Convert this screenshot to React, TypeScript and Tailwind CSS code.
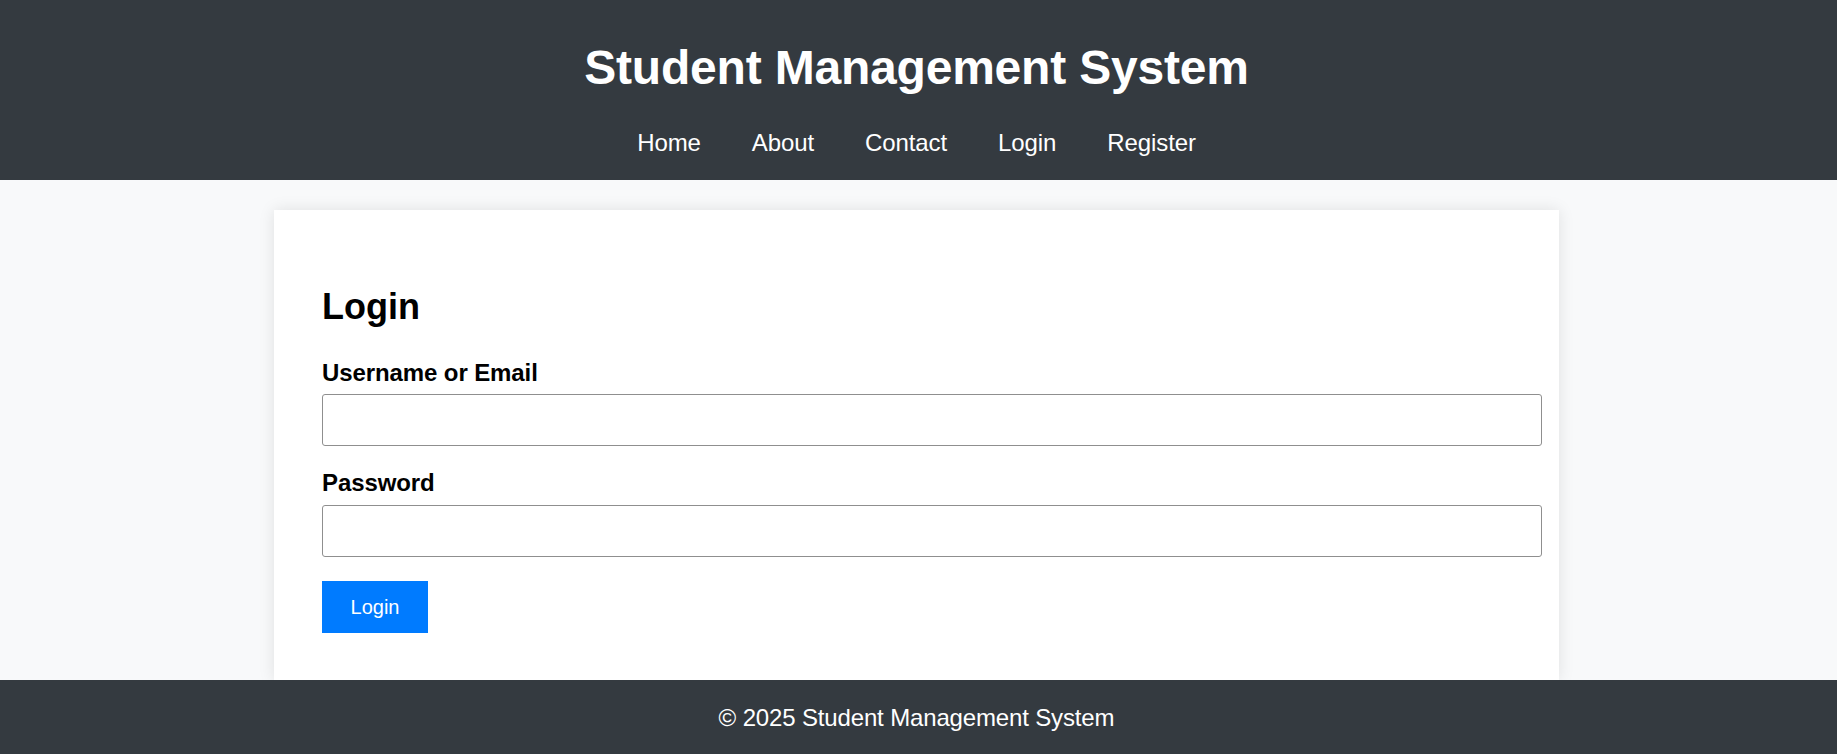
const navLinks = ["Home", "About", "Contact", "Login", "Register"];

const App: React.FC = () => {
    return (
        <div className="h-screen flex flex-col bg-[#f8f9fa] font-['Liberation_Sans',Arial,sans-serif] overflow-hidden">
            <header className="h-[180px] shrink-0 bg-[#343a40] text-white flex flex-col items-center pt-[40px] pr-[4px]">
                <h1 className="text-[48px] leading-[56px] font-bold tracking-[-0.2px]">Student Management System</h1>
                <nav className="mt-[33px] flex gap-[51px] text-[24px] leading-[28px] tracking-[-0.1px]">
                    {navLinks.map((link) => (
                        <a key={link} href="#" className="text-white">
                            {link}
                        </a>
                    ))}
                </nav>
            </header>

            <main className="flex-1 min-h-0">
                <div className="ml-[274px] mt-[30px] w-[1285px] h-[470px] bg-white shadow-[0_0_15px_rgba(0,0,0,0.1)] px-[48px] pt-[48px]">
                    <h2 className="mt-[28px] text-[36px] leading-[42px] font-bold text-black">Login</h2>
                    <form onSubmit={(e) => e.preventDefault()}>
                        <label htmlFor="username" className="block mt-[31px] text-[24px] leading-[28px] font-bold text-black tracking-[-0.1px]">
                            Username or Email
                        </label>
                        <input
                            id="username"
                            type="text"
                            className="block mt-[7px] w-[calc(100%+31px)] h-[52px] px-[15px] text-[20px] bg-white border-[1.5px] border-[#8f8f8f] rounded-[3px] outline-none"
                        />
                        <label htmlFor="password" className="block mt-[23px] text-[24px] leading-[28px] font-bold text-black tracking-[-0.1px]">
                            Password
                        </label>
                        <input
                            id="password"
                            type="password"
                            className="block mt-[8px] w-[calc(100%+31px)] h-[52px] px-[15px] text-[20px] bg-white border-[1.5px] border-[#8f8f8f] rounded-[3px] outline-none"
                        />
                        <button
                            type="submit"
                            className="mt-[24px] w-[106px] h-[52px] bg-[#007bff] text-white text-[20px] leading-[23px]"
                        >
                            Login
                        </button>
                    </form>
                </div>
            </main>

            <footer className="h-[74px] shrink-0 bg-[#343a40] text-white text-center pt-[24px] pr-[4px] text-[24px] leading-[28px] tracking-[-0.15px]">
                © 2025 Student Management System
            </footer>
        </div>
    );
};

export default App;
